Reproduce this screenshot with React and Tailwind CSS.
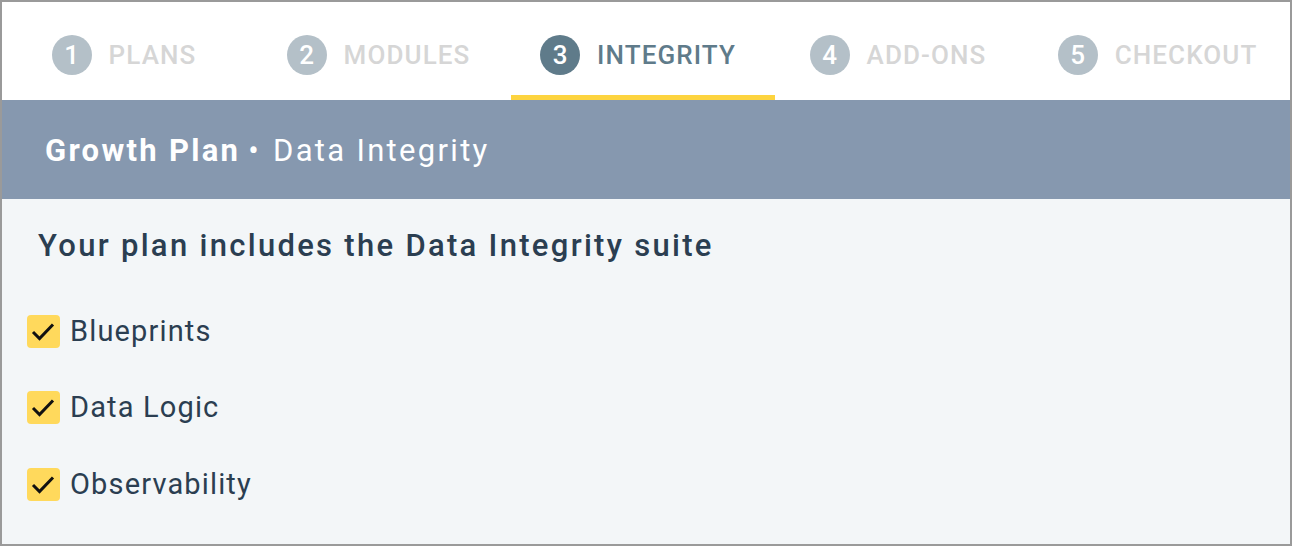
import React from "react";

const steps = [
  { n: 1, label: "PLANS", w: "w-[244px]", pad: "" },
  { n: 2, label: "MODULES", w: "w-[265px]", pad: "" },
  { n: 3, label: "INTEGRITY", w: "w-[264px]", pad: "pr-[10px]", active: true },
  { n: 4, label: "ADD-ONS", w: "w-[256px]", pad: "pr-[10px]" },
  { n: 5, label: "CHECKOUT", w: "w-[259px]", pad: "pr-[6px]" },
];

const items = ["Blueprints", "Data Logic", "Observability"];

function Step({ n, label, w, pad, active }) {
  return (
    <div className={`${w} h-full flex flex-col`}>
      <div className={`flex-1 flex items-center justify-center gap-[17px] pt-[13px] ${pad}`}>
        <span
          className={`w-10 h-10 rounded-full flex items-center justify-center text-[26px] font-medium text-white ${
            active ? "bg-[#5f7b8a]" : "bg-[#b4c0c8]"
          }`}
        >
          {n}
        </span>
        <span className={`text-[26px] font-medium tracking-[1.1px] ${active ? "text-[#5f7b8a]" : "text-[#d6d6d6]"}`}>
          {label}
        </span>
      </div>
      <div className={`h-[5px] ${active ? "bg-[#fdd43f]" : ""}`} />
    </div>
  );
}

function Check() {
  return (
    <span className="w-[33px] h-[33px] shrink-0 rounded-[4px] bg-[#ffd95c] flex items-center justify-center">
      <svg width="33" height="33" viewBox="0 0 33 33" fill="none" stroke="#111" strokeWidth="3">
        <path d="M6 17l6.5 6.5L26 9.5" />
      </svg>
    </span>
  );
}

export default function App() {
  return (
    <div className="w-[1292px] h-[546px] border-2 border-[#9a9a9a] bg-[#f3f6f8] flex flex-col font-['Roboto',sans-serif]">
      <div className="h-[98px] bg-white flex">
        {steps.map((s) => (
          <Step key={s.n} {...s} />
        ))}
      </div>
      <div className="h-[99px] bg-[#8698af] flex items-center pl-[43px] pt-[3px] text-white text-[31px] tracking-[2.3px]">
        <span className="font-bold">Growth Plan</span>
        <span className="ml-[8px] mr-[12px]">•</span>
        <span>Data Integrity</span>
      </div>
      <div className="pl-[36px] pt-[24px] text-[31px] font-medium tracking-[2.3px] text-[#2b3e51]">
        Your plan includes the Data Integrity suite
      </div>
      <div className="pl-[25px] pt-[40px] flex flex-col gap-[33px]">
        {items.map((t) => (
          <div key={t} className="flex items-center gap-[10px] text-[29px] tracking-[1.15px] text-[#2b3e51]">
            <Check />
            <span>{t}</span>
          </div>
        ))}
      </div>
    </div>
  );
}
